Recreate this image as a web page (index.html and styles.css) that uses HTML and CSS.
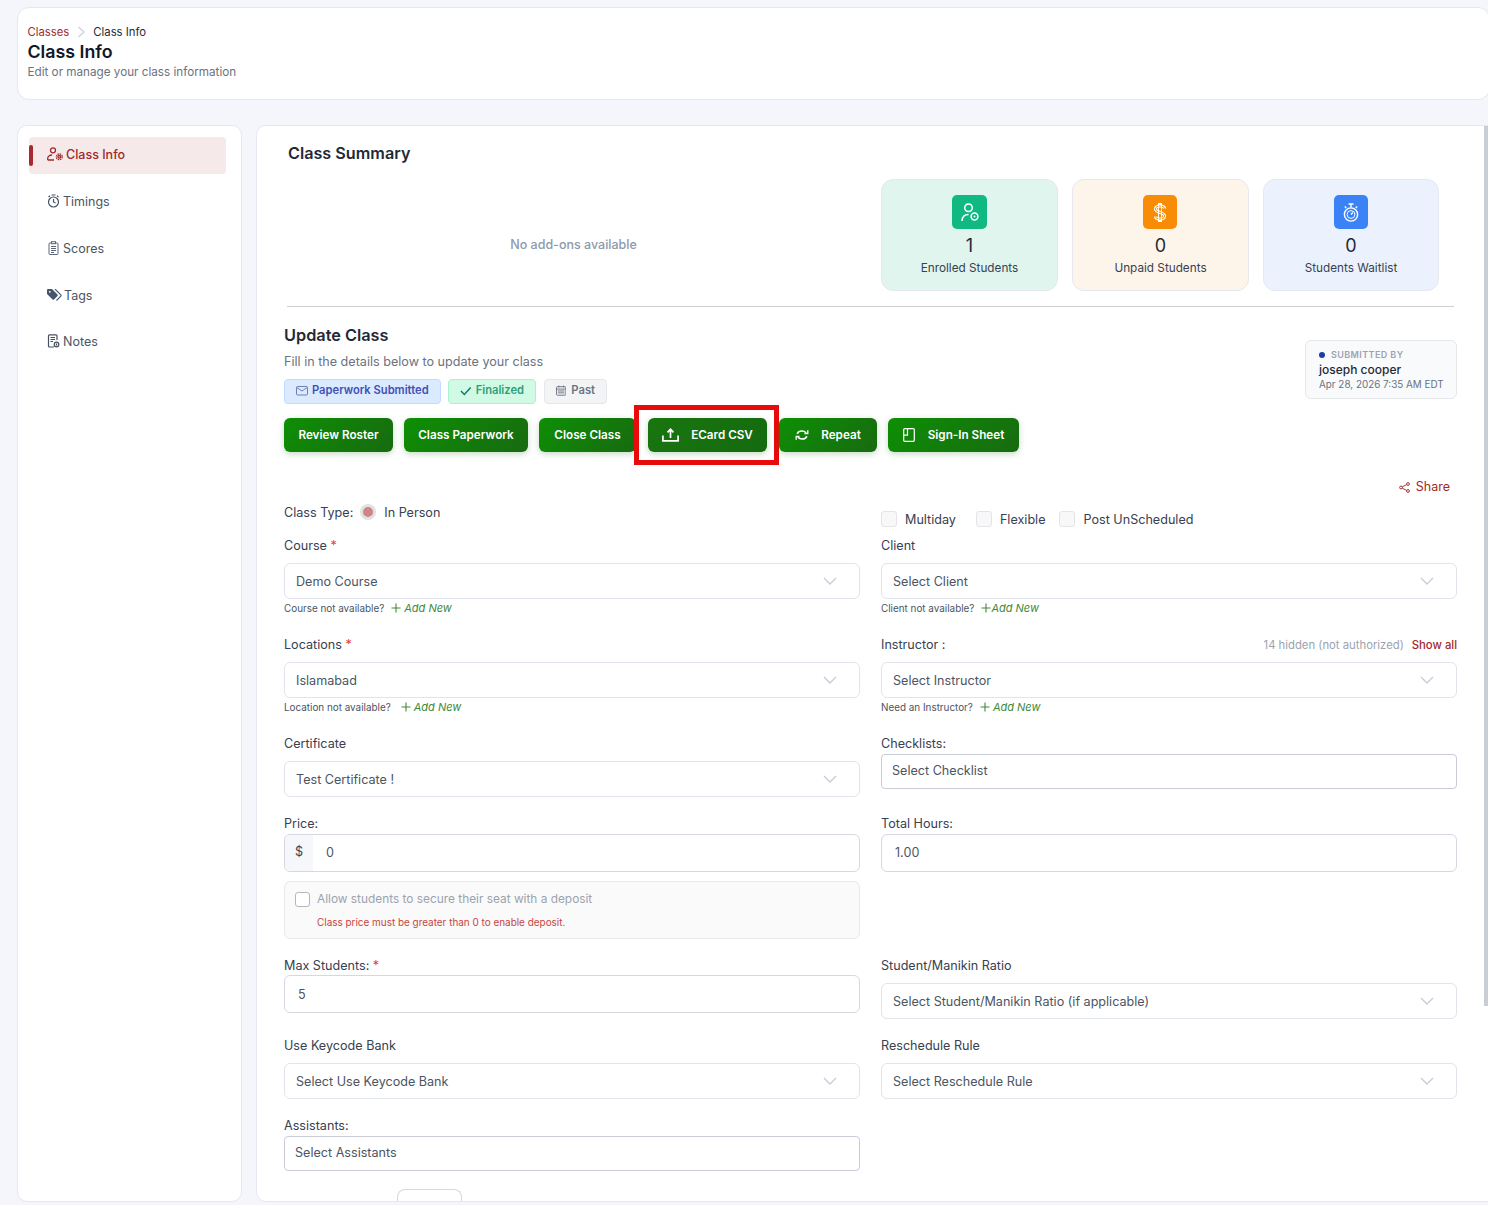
FILE: index.html
```html
<!DOCTYPE html>
<html lang="en">
<head>
<meta charset="utf-8">
<title>Class Info</title>
<link rel="stylesheet" href="styles.css">
</head>
<body>
<svg class="defs" width="0" height="0" aria-hidden="true">
  <symbol id="chev" viewBox="0 0 14 8"><path d="M1 1l6 6 6-6" fill="none" stroke="currentColor" stroke-width="1.4"/></symbol>
  <symbol id="plus" viewBox="0 0 10 10"><path d="M5 .5v9M.5 5h9" fill="none" stroke="currentColor" stroke-width="1.1"/></symbol>
</svg>
<div class="page">
  <header class="page-head">
    <div class="crumbs"><span class="crumb-link">Classes</span>
      <svg class="crumb-sep" width="9" height="12" viewBox="0 0 9 12"><path d="M1.500 1l5.500 5-5.500 5" fill="none" stroke="#cfd3dc" stroke-width="1.500"/></svg>
      <span>Class Info</span></div>
    <h1>Class Info</h1>
    <p>Edit or manage your class information</p>
  </header>
  <div class="shell">
    <nav class="side">
      <a class="nav active"><svg width="16" height="14" viewBox="0 0 16 14" fill="none" stroke="currentColor" stroke-width="1.300"><circle cx="6" cy="3.300" r="2.500"/><path d="M.7 13v-1.500c0-2 2-3.500 4.400-3.500M.7 13H7"/><circle cx="12.300" cy="9.800" r="1.300"/><circle cx="12.300" cy="9.800" r="2.900" stroke-dasharray="1.500 .78"/></svg><span>Class Info</span></a>
      <a class="nav"><svg width="13" height="14" viewBox="0 0 13 14" fill="none" stroke="#465062" stroke-width="1.200"><circle cx="6.500" cy="8" r="5"/><path d="M6.500 5v3l2 1M4.500 1h4M1.500 3L3 1.800M11.500 3L10 1.800"/></svg><span>Timings</span></a>
      <a class="nav"><svg width="13" height="14" viewBox="0 0 13 14" fill="none" stroke="#5b6678" stroke-width="1"><rect x="2" y="2" width="9" height="11.500" rx="1"/><rect x="4.500" y=".7" width="4" height="2" fill="#fff"/><path d="M4 5.500h5M4 7.500h5M4 9.500h5M4 11.500h3"/></svg><span>Scores</span></a>
      <a class="nav nav-tags"><svg width="15" height="12" viewBox="0 0 15 12"><path d="M0 1.200C0 .5.500 0 1.200 0H5l5.500 5.500c.4.400.4 1 0 1.400L7 10.500c-.4.400-1 .4-1.400 0L0 5z" fill="#46556b"/><path d="M8 0l5.800 5.800c.4.400.4 1 0 1.400L9.500 11.500" fill="none" stroke="#46556b" stroke-width="1.100"/><circle cx="2.800" cy="2.800" r=".9" fill="#fff"/></svg><span>Tags</span></a>
      <a class="nav nav-notes"><svg width="13" height="14" viewBox="0 0 13 14" fill="none" stroke="#465062" stroke-width="1.200"><path d="M7 13H2.500a1 1 0 0 1-1-1V1.800a1 1 0 0 1 1-1h6.500a1 1 0 0 1 1 1V6"/><path d="M3.500 3.500h4.500M3.500 5.500h4.500M3.500 7.500h2.500"/><circle cx="9.500" cy="10.500" r="2.300"/><path d="M9.500 9.500v2"/></svg><span>Notes</span></a>
    </nav>
    <main class="main">
      <h2 class="summary-title">Class Summary</h2>
      <section class="summary">
        <div class="no-addons">No add-ons available</div>
        <div class="stats">
          <div class="stat stat-green">
            <div class="stat-icon"><svg width="18" height="19" viewBox="0 0 18 19" fill="none" stroke="#fff" stroke-width="1.500"><circle cx="7.500" cy="4.800" r="3.800"/><path d="M1 18c.2-4 2.800-6.500 6.500-6.500"/><circle cx="13.500" cy="13.500" r="3.400"/><circle cx="13.500" cy="13.500" r="1" fill="#fff" stroke="none"/></svg></div>
            <div class="stat-num">1</div><div class="stat-label">Enrolled Students</div>
          </div>
          <div class="stat stat-orange">
            <div class="stat-icon"><svg width="14" height="19" viewBox="0 0 14 19" fill="none"><path d="M5 1h4M5 18h4M11.500 5.500C11.500 4 9.500 3 7 3S2.500 4 2.500 6 4.500 8.700 7 9.500s4.500 1.300 4.500 3.500-2 3-4.500 3-4.500-1-4.500-2.500" stroke="#fff" stroke-width="3"/><path d="M11.500 5.500C11.500 4 9.500 3 7 3S2.500 4 2.500 6 4.500 8.700 7 9.500s4.500 1.300 4.500 3.500-2 3-4.500 3-4.500-1-4.500-2.500" stroke="#f98c06" stroke-width="1"/><path d="M5.500 1v17M8.500 1v17" stroke="#fff" stroke-width=".9"/></svg></div>
            <div class="stat-num">0</div><div class="stat-label">Unpaid Students</div>
          </div>
          <div class="stat stat-blue">
            <div class="stat-icon"><svg width="16" height="19" viewBox="0 0 16 19" fill="none" stroke="#fff" stroke-width="1.400"><circle cx="8" cy="11.500" r="6.600"/><circle cx="8" cy="11.500" r="3.900" stroke-width="1"/><path d="M8 11.500l1.800-2M5.500 1h5M8 1v3.500M1.800 3.500l1.500 1.500M14.200 3.500L12.700 5"/></svg></div>
            <div class="stat-num">0</div><div class="stat-label">Students Waitlist</div>
          </div>
        </div>
      </section>
      <hr class="divider">
      <section class="update-head">
        <div>
          <h2 class="update-title">Update Class</h2>
          <p class="update-sub">Fill in the details below to update your class</p>
          <div class="badges">
            <span class="badge badge-blue"><svg width="12" height="10" viewBox="0 0 12 10" fill="none" stroke="#6b7fb5" stroke-width="1"><rect x=".5" y=".5" width="11" height="8.500" rx="1"/><path d="M.8 1.500L6 5l5.200-3.500"/></svg>Paperwork Submitted</span>
            <span class="badge badge-green"><svg width="12" height="10" viewBox="0 0 12 10" fill="none" stroke="#0f766e" stroke-width="1.500"><path d="M1 5l3.500 3.500L11 1.500"/></svg>Finalized</span>
            <span class="badge badge-gray"><svg width="11" height="11" viewBox="0 0 11 11" fill="none" stroke="#6b7280" stroke-width="1"><rect x=".5" y="1.500" width="10" height="9" rx="1"/><path d="M.5 4h10M3 .2v2M8 .2v2M2 6h7M2 8h7"/></svg>Past</span>
          </div>
        </div>
        <aside class="submitted">
          <div class="sub-top"><i class="dot"></i>SUBMITTED BY</div>
          <div class="sub-name">joseph cooper</div>
          <div class="sub-date">Apr 28, 2026 7:35 AM EDT</div>
        </aside>
      </section>
      <div class="actions">
        <button class="btn b-roster">Review Roster</button>
        <button class="btn b-paper">Class Paperwork</button>
        <button class="btn b-close">Close Class</button>
        <button class="btn btn-dark b-ecard"><svg width="17" height="14" viewBox="0 0 17 14" fill="none" stroke="#fff" stroke-width="1.700"><path d="M.9 7.500v5.400h15.200V7.500M8.500 10V1.500M5.500 4.300l3-3 3 3"/></svg>ECard CSV<span class="highlight"></span></button>
        <button class="btn b-repeat"><svg width="14" height="12" viewBox="0 0 14 12" fill="none" stroke="#fff" stroke-width="1.700"><path d="M2.200 4.800C2.800 3 4.700 2 7 2c1.700 0 3 .6 4 1.700M11.800 7.200C11.200 9 9.300 10 7 10c-1.700 0-3-.6-4-1.700"/><path d="M12.800 1.200v3.300H9.500M1.200 10.800V7.500h3.300" stroke-width="1.300"/></svg>Repeat</button>
        <button class="btn b-sign"><svg width="12" height="14" viewBox="0 0 12 14" fill="none" stroke="#fff" stroke-width="1.200"><rect x=".7" y=".7" width="10.600" height="12.600" rx="1"/><path d="M4.500 .7v6.500H1"/></svg>Sign-In Sheet</button>
      </div>
      <div class="share-row"><a class="share"><svg width="11" height="11" viewBox="0 0 11 11" fill="none" stroke="#9f3a3a" stroke-width="1"><circle cx="9" cy="2" r="1.400"/><circle cx="2" cy="5.500" r="1.400"/><circle cx="9" cy="9" r="1.400"/><path d="M3.300 4.800l4.400-2.200M3.300 6.200l4.400 2.200"/></svg>Share</a></div>
      <div class="type-row">
        <div class="class-type"><span>Class Type:</span><i class="radio"></i><span class="radio-label">In Person</span></div>
        <div class="checks"><label class="check check-first"><i class="box"></i>Multiday</label><label class="check"><i class="box"></i>Flexible</label><label class="check"><i class="box"></i>Post UnScheduled</label></div>
      </div>
      <div class="row r-99">
        <div class="field"><label>Course <em>*</em></label>
          <div class="select mt9"><span>Demo Course</span><svg class="chev"><use href="#chev"/></svg></div>
          <div class="helper">Course not available?<a class="add add-gap"><svg width="10" height="10"><use href="#plus"/></svg><span>Add New</span></a></div></div>
        <div class="field"><label>Client</label>
          <div class="select mt9"><span>Select Client</span><svg class="chev"><use href="#chev"/></svg></div>
          <div class="helper">Client not available?<a class="add add-tight"><svg width="10" height="10"><use href="#plus"/></svg><span>Add New</span></a></div></div>
      </div>
      <div class="row r-99">
        <div class="field"><label>Locations <em>*</em></label>
          <div class="select mt9"><span>Islamabad</span><svg class="chev"><use href="#chev"/></svg></div>
          <div class="helper">Location not available?<a class="add add-wide"><svg width="10" height="10"><use href="#plus"/></svg><span>Add New</span></a></div></div>
        <div class="field"><div class="label-row"><label>Instructor :</label><div class="hidden-note"><span>14 hidden (not authorized)</span><a>Show all</a></div></div>
          <div class="select mt9"><span>Select Instructor</span><svg class="chev"><use href="#chev"/></svg></div>
          <div class="helper">Need an Instructor?<a class="add add-gap"><svg width="10" height="10"><use href="#plus"/></svg><span>Add New</span></a></div></div>
      </div>
      <div class="row r-80">
        <div class="field"><label>Certificate</label>
          <div class="select mt9"><span>Test Certificate !</span><svg class="chev"><use href="#chev"/></svg></div></div>
        <div class="field"><label>Checklists:</label>
          <div class="multi mt2">Select Checklist</div></div>
      </div>
      <div class="row r-142">
        <div class="field"><label>Price:</label>
          <div class="input-group mt2"><span class="addon">$</span><span class="value">0</span></div>
          <div class="deposit"><div class="deposit-top"><i class="dep-box"></i>Allow students to secure their seat with a deposit</div><div class="deposit-err">Class price must be greater than 0 to enable deposit.</div></div></div>
        <div class="field"><label>Total Hours:</label>
          <div class="input mt2">1.00</div></div>
      </div>
      <div class="row r-80">
        <div class="field"><label>Max Students: <em>*</em></label>
          <div class="input input-max mt1">5</div></div>
        <div class="field"><label>Student/Manikin Ratio</label>
          <div class="select mt9"><span>Select Student/Manikin Ratio (if applicable)</span><svg class="chev"><use href="#chev"/></svg></div></div>
      </div>
      <div class="row r-80">
        <div class="field"><label>Use Keycode Bank</label>
          <div class="select mt9"><span>Select Use Keycode Bank</span><svg class="chev"><use href="#chev"/></svg></div></div>
        <div class="field"><label>Reschedule Rule</label>
          <div class="select mt9"><span>Select Reschedule Rule</span><svg class="chev"><use href="#chev"/></svg></div></div>
      </div>
      <div class="row r-73">
        <div class="field"><label>Assistants:</label>
          <div class="multi mt2">Select Assistants</div></div>
      </div>
      <div class="cut-box"></div>
      <div class="scrollbar"></div>
    </main>
  </div>
</div>
</body>
</html>
```
FILE: styles.css
```css
* { box-sizing: border-box; }
html, body { margin: 0; height: 100%; overflow: hidden; }
body { background: #f4f6fb; font-family: Inter, "Liberation Sans", sans-serif; color: #374151; font-size: 12.600px; }
.defs { position: absolute; }
h1, h2, p { margin: 0; }
.page { padding: 7px 0 0 17px; width: 1488px; height: 1205px; }

.page-head { height: 93px; width: 1473px; background: #fff; border: 1px solid #e5e8f0; border-radius: 12px; padding: 16px 10px 0 9.500px; }
.crumbs { display: flex; align-items: center; font-size: 11.300px; line-height: 16px; color: #1f2937; }
.crumb-link { color: #a32a2a; }
.crumb-sep { margin: 0 7px 0 8px; }
.page-head h1 { font-size: 17.800px; font-weight: 600; line-height: 22px; color: #111827; margin-top: 1px; }
.page-head p { font-size: 11.700px; line-height: 16px; color: #6b7280; margin-top: 1px; }

.shell { display: grid; grid-template-columns: 225px 1fr; column-gap: 14px; margin-top: 25px; height: 1077px; width: 1472px; }
.side { background: #fff; border: 1px solid #e5e8f0; border-radius: 10px; padding: 11px 15px 0 11px; display: flex; flex-direction: column; gap: 10px; }
.nav { position: relative; display: flex; align-items: center; gap: 3px; height: 37px; padding: 0 0 3px 18px; border-radius: 4px; color: #4b5563; font-size: 12.500px; flex: none; }
.nav svg { flex: none; }
.nav-tags svg { margin-right: -1px; }
.nav-notes { margin-top: -1px; }
.nav.active { background: #f5e9e9; color: #a32a2a; font-weight: 500; gap: 3px; }
.nav.active::before { content: ""; position: absolute; left: 0; top: 8px; width: 4px; height: 21px; background: #a82a2e; border-radius: 2px; }

.main { position: relative; background: #fff; border: 1px solid #e5e8f0; border-radius: 10px 0 0 10px; padding: 0 0 0 27px; overflow: hidden; }
.summary-title { font-size: 16.200px; font-weight: 600; line-height: 20px; color: #1f2937; margin: 17px 0 16px 4px; }
.summary { display: flex; height: 112px; }
.no-addons { width: 579px; text-align: center; line-height: 132px; height: 112px; color: #8e99aa; font-weight: 500; font-size: 12.500px; }
.stats { display: flex; gap: 14px; margin-left: 18px; }
.stat { width: 177px; height: 112px; border: 1px solid #e5e8ee; border-radius: 12px; display: flex; flex-direction: column; align-items: center; padding-top: 15px; }
.stat-green { background: #e0f5ed; }
.stat-orange { background: #fdf5ea; }
.stat-blue { background: #ebf2fd; width: 176px; }
.stat-icon { width: 35px; height: 34px; border-radius: 5px; display: flex; align-items: center; justify-content: center; }
.stat-green .stat-icon { background: #10b981; }
.stat-orange .stat-icon { background: #f98c06; width: 34px; margin-right: 1px; }
.stat-blue .stat-icon { background: #3b82f6; width: 34px; }
.stat-num { font-size: 18px; line-height: 22px; margin-top: 6px; color: #1f2937; }
.stat-label { font-size: 11.760px; line-height: 16px; margin-top: 3px; color: #374151; }
.divider { border: 0; border-top: 1px solid #cfcfcf; margin: 15px 0 0 3px; width: 1167px; height: 0; }

.update-head { display: flex; justify-content: space-between; width: 1173px; margin-top: 18px; }
.update-title { font-size: 16.300px; font-weight: 600; line-height: 20px; color: #1f2937; }
.update-sub { font-size: 12.600px; line-height: 18px; color: #6b7280; margin-top: 8px; }
.badges { display: flex; gap: 7px; margin-top: 8px; }
.badge { display: flex; align-items: center; gap: 4px; height: 25px; padding: 0 11px 4px; border-radius: 4px; font-size: 11.200px; font-weight: 600; border: 1px solid; }
.badge svg { margin-top: 2px; }
.badge-blue { background: #dbeafe; border-color: #bfdbfe; color: #3f51b5; width: 157px; }
.badge-green { background: #d1fae5; border-color: #a7f3d0; color: #2f9e78; width: 88px; }
.badge-gray { background: #f3f4f6; border-color: #e5e7eb; color: #6b7280; width: 63px; margin-left: 1px; gap: 5px; }
.submitted { width: 152px; height: 59px; margin-top: 15px; background: #f9fafb; border: 1px solid #e5e7eb; border-radius: 6px; padding: 8px 0 0 13px; }
.sub-top { display: flex; align-items: center; gap: 6px; font-size: 9px; font-weight: 600; letter-spacing: .4px; line-height: 12px; color: #9ca3af; }
.dot { width: 6px; height: 6px; border-radius: 50%; background: #1e3aa8; }
.sub-name { font-size: 12px; font-weight: 500; line-height: 16px; color: #1f2937; margin-top: 1px; }
.sub-date { font-size: 9.900px; line-height: 13px; color: #6b7280; white-space: nowrap; }

.actions { display: flex; margin-top: 14px; height: 34px; }
.btn { position: relative; height: 34px; border: 0; border-radius: 6px; padding: 0 0 1px; display: flex; align-items: center; justify-content: center; font-family: inherit; font-size: 11.700px; font-weight: 600; color: #fff; background: linear-gradient(135deg, #0e8f05, #176a10); box-shadow: 0 2px 6px rgba(20,110,20,.25); }
.btn-dark { background: linear-gradient(135deg, #19760f, #156a0f); }
.b-roster { width: 109px; }
.b-paper { width: 124px; margin-left: 11px; }
.b-close { width: 97px; margin-left: 11px; }
.b-ecard { width: 119px; margin-left: 12px; gap: 12px; }
.b-repeat { width: 98px; margin-left: 12px; gap: 12px; }
.b-sign { width: 131px; margin-left: 11px; gap: 13px; }
.highlight { position: absolute; left: -14px; top: -13px; width: 145px; height: 60px; border: 5px solid #e80b0b; pointer-events: none; }

.share-row { width: 1166px; display: flex; justify-content: flex-end; margin-top: 26px; }
.share { display: flex; align-items: center; gap: 6px; line-height: 18px; color: #a32a2a; font-size: 12.500px; }
.type-row { display: grid; grid-template-columns: 576px 576px; column-gap: 21px; height: 40px; }
.class-type { display: flex; align-items: center; height: 18px; margin-top: 7px; color: #374151; }
.radio { width: 16px; height: 16px; border-radius: 50%; margin: 0 8px 0 7px; background: #e1e1e1; position: relative; }
.radio::after { content: ""; position: absolute; left: 3px; top: 3px; width: 10px; height: 10px; border-radius: 50%; background: #cf8585; }
.checks { display: flex; gap: 14px; align-items: center; height: 18px; margin-top: 14px; }
.check { display: flex; align-items: center; gap: 8px; color: #374151; }
.check-first { margin-right: 6px; }
.box { width: 16px; height: 16px; border: 1px solid #e3e5e9; border-radius: 3px; background: #f8f8f9; }

.row { display: grid; grid-template-columns: 576px 576px; column-gap: 21px; }
.r-99 { height: 99px; }
.r-80 { height: 80px; }
.r-142 { height: 142px; }
.r-73 { height: 73px; }
.field label { display: block; height: 18px; line-height: 20px; color: #374151; }
.field em { color: #e23b3b; font-style: normal; }
.label-row { display: flex; justify-content: space-between; height: 18px; }
.hidden-note { display: flex; gap: 8px; font-size: 11.300px; line-height: 21px; color: #9ca3af; }
.hidden-note a { color: #a32a2a; font-weight: 500; }
.mt1 { margin-top: 1px; }
.mt2 { margin-top: 2px; }
.mt9 { margin-top: 9px; }
.select { height: 36px; border: 1px solid #e1e4eb; border-radius: 6px; display: flex; align-items: center; justify-content: space-between; padding: 0 22px 0 11px; color: #4b5563; background: #fff; }
.chev { width: 14px; height: 8px; color: #c6cdd9; }
.helper { display: flex; align-items: center; font-size: 9.900px; line-height: 18px; color: #4b5563; }
.add { display: flex; align-items: center; color: #3f8a3a; font-size: 11px; font-style: italic; }
.add svg { color: #3f8a3a; margin-right: 3px; }
.add-gap { margin-left: 7px; }
.add-wide { margin-left: 10px; }
.add-tight { margin-left: 7px; }
.add-tight svg { margin-right: 0; }
.multi { height: 35px; border: 1px solid #c9ccd6; border-radius: 4px; padding: 0 10px; line-height: 31px; color: #4b5563; }
.input { height: 38px; border: 1px solid #d5d8e0; border-radius: 6px; padding: 0 13px; line-height: 35px; color: #4b5563; }
.input-max { line-height: 37px; }
.input-group { height: 38px; border: 1px solid #d5d8e0; border-radius: 6px; display: flex; overflow: hidden; }
.addon { width: 28px; background: #f6f7fa; text-align: center; line-height: 34px; color: #374151; }
.value { padding-left: 13px; line-height: 35px; color: #4b5563; }
.deposit { margin-top: 9px; height: 58px; background: #fafafa; border: 1px solid #e8e9ed; border-radius: 6px; padding: 9px 10px; }
.deposit-top { display: flex; align-items: center; gap: 7px; font-size: 11.870px; line-height: 16px; color: #9ca3af; }
.dep-box { width: 15px; height: 15px; border: 1px solid #b4b7bd; border-radius: 3px; background: #fff; }
.deposit-err { font-size: 9.940px; line-height: 14px; color: #c8443f; margin: 8px 0 0 22px; }
.cut-box { width: 65px; height: 14px; margin-left: 113px; border: 1px solid #d5d8e0; border-bottom: 0; border-radius: 8px 8px 0 0; }
.scrollbar { position: absolute; right: 0; top: 0; width: 4px; height: 880px; background: #c9cdd6; }
```
